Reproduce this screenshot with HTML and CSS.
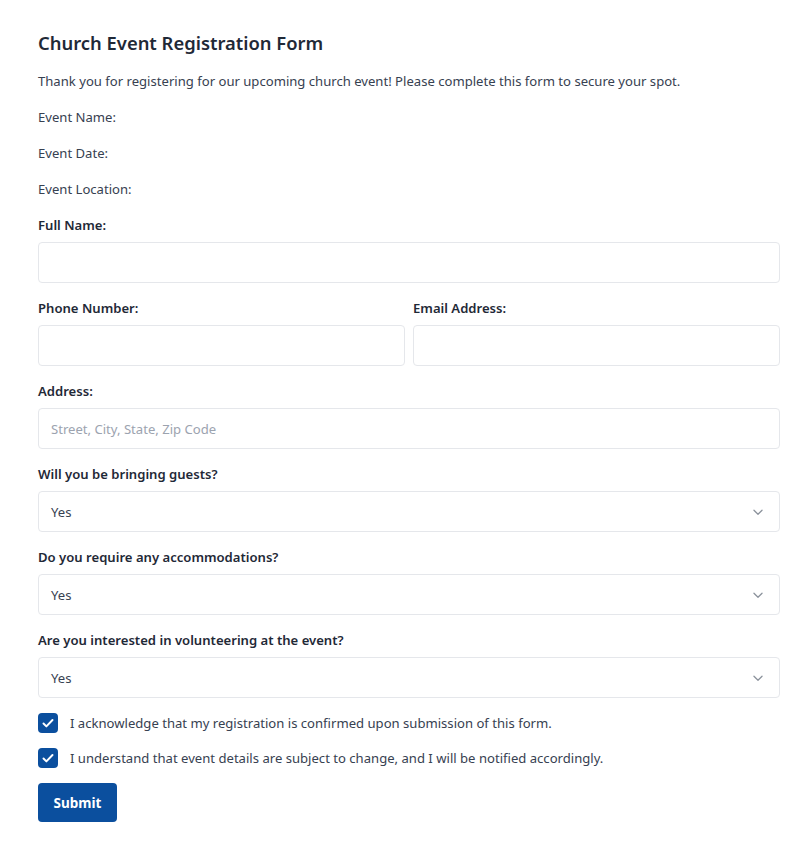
FILE: index.html
```html
<!DOCTYPE html>
<html lang="en">
<head>
<meta charset="utf-8">
<title>Church Event Registration Form</title>
<link rel="stylesheet" href="styles.css">
</head>
<body>
<main class="page">
  <h1 class="title">Church Event Registration Form</h1>
  <p class="text">Thank you for registering for our upcoming church event! Please complete this form to secure your spot.</p>
  <p class="text">Event Name:</p>
  <p class="text">Event Date:</p>
  <p class="text">Event Location:</p>
  <form class="form">
    <div class="field">
      <label class="label">Full Name:</label>
      <input class="input" type="text">
    </div>
    <div class="row">
      <div class="field">
        <label class="label">Phone Number:</label>
        <input class="input" type="text">
      </div>
      <div class="field">
        <label class="label">Email Address:</label>
        <input class="input" type="text">
      </div>
    </div>
    <div class="field">
      <label class="label">Address:</label>
      <input class="input" type="text" placeholder="Street, City, State, Zip Code">
    </div>
    <div class="field">
      <label class="label">Will you be bringing guests?</label>
      <div class="select"><span>Yes</span><svg class="chev" viewBox="0 0 20 20" width="18" height="18"><path d="M5.5 8l4.5 4.5 4.5-4.5" fill="none" stroke="#8b929c" stroke-width="1.4" stroke-linecap="round" stroke-linejoin="round"/></svg></div>
    </div>
    <div class="field">
      <label class="label">Do you require any accommodations?</label>
      <div class="select"><span>Yes</span><svg class="chev" viewBox="0 0 20 20" width="18" height="18"><path d="M5.5 8l4.5 4.5 4.5-4.5" fill="none" stroke="#8b929c" stroke-width="1.4" stroke-linecap="round" stroke-linejoin="round"/></svg></div>
    </div>
    <div class="field">
      <label class="label">Are you interested in volunteering at the event?</label>
      <div class="select"><span>Yes</span><svg class="chev" viewBox="0 0 20 20" width="18" height="18"><path d="M5.5 8l4.5 4.5 4.5-4.5" fill="none" stroke="#8b929c" stroke-width="1.4" stroke-linecap="round" stroke-linejoin="round"/></svg></div>
    </div>
    <div class="check">
      <span class="box"><svg viewBox="0 0 20 20" width="18" height="18"><path d="M5 10.5l3.2 3.2 6.8-7" fill="none" stroke="#fff" stroke-width="2.2" stroke-linecap="round" stroke-linejoin="round"/></svg></span>
      <span class="check-text">I acknowledge that my registration is confirmed upon submission of this form.</span>
    </div>
    <div class="check">
      <span class="box"><svg viewBox="0 0 20 20" width="18" height="18"><path d="M5 10.5l3.2 3.2 6.8-7" fill="none" stroke="#fff" stroke-width="2.2" stroke-linecap="round" stroke-linejoin="round"/></svg></span>
      <span class="check-text">I understand that event details are subject to change, and I will be notified accordingly.</span>
    </div>
    <button class="btn" type="button">Submit</button>
  </form>
</main>
</body>
</html>
```
FILE: styles.css
```css
* { box-sizing: border-box; }
html, body { margin: 0; padding: 0; background: #fff; }
body {
  font-family: "Noto Sans", "Open Sans", sans-serif;
  font-size: 13.1px;
  color: #374151;
}
.page {
  padding: 29px 20px 30px 38px;
}
.title {
  margin: 0 0 14px;
  font-size: 18.4px;
  line-height: 28px;
  font-weight: 600;
  color: #1f2937;
}
.text {
  margin: 0 0 16px;
  line-height: 20px;
  color: #374151;
}
.form { display: flex; flex-direction: column; }
.field { display: flex; flex-direction: column; margin-bottom: 15px; }
.row { display: grid; grid-template-columns: 1fr 1fr; gap: 8px; }
.label {
  line-height: 20px;
  font-weight: 600;
  color: #1f2937;
  margin-bottom: 7px;
}
.input, .select {
  height: 41px;
  border: 1px solid #e5e7eb;
  border-radius: 4px;
  background: #fff;
  font-family: inherit;
  font-size: 13.1px;
  color: #374151;
  padding: 0 12px;
  width: 100%;
}
.input::placeholder { color: #9ca3af; }
.select {
  display: flex;
  align-items: center;
  justify-content: space-between;
  padding-right: 12px;
}
.chev { display: block; }
.check {
  display: flex;
  align-items: center;
  gap: 12px;
  height: 20px;
  margin-bottom: 15px;
}
.box {
  width: 20px;
  height: 20px;
  border-radius: 4px;
  background: #0b4f9e;
  display: flex;
  align-items: center;
  justify-content: center;
}
.check-text { line-height: 20px; color: #374151; }
.btn {
  align-self: flex-start;
  width: 79px;
  height: 39px;
  border: none;
  border-radius: 4px;
  background: #0b4f9e;
  color: #fff;
  font-family: inherit;
  font-size: 13.5px;
  font-weight: 700;
}
```
